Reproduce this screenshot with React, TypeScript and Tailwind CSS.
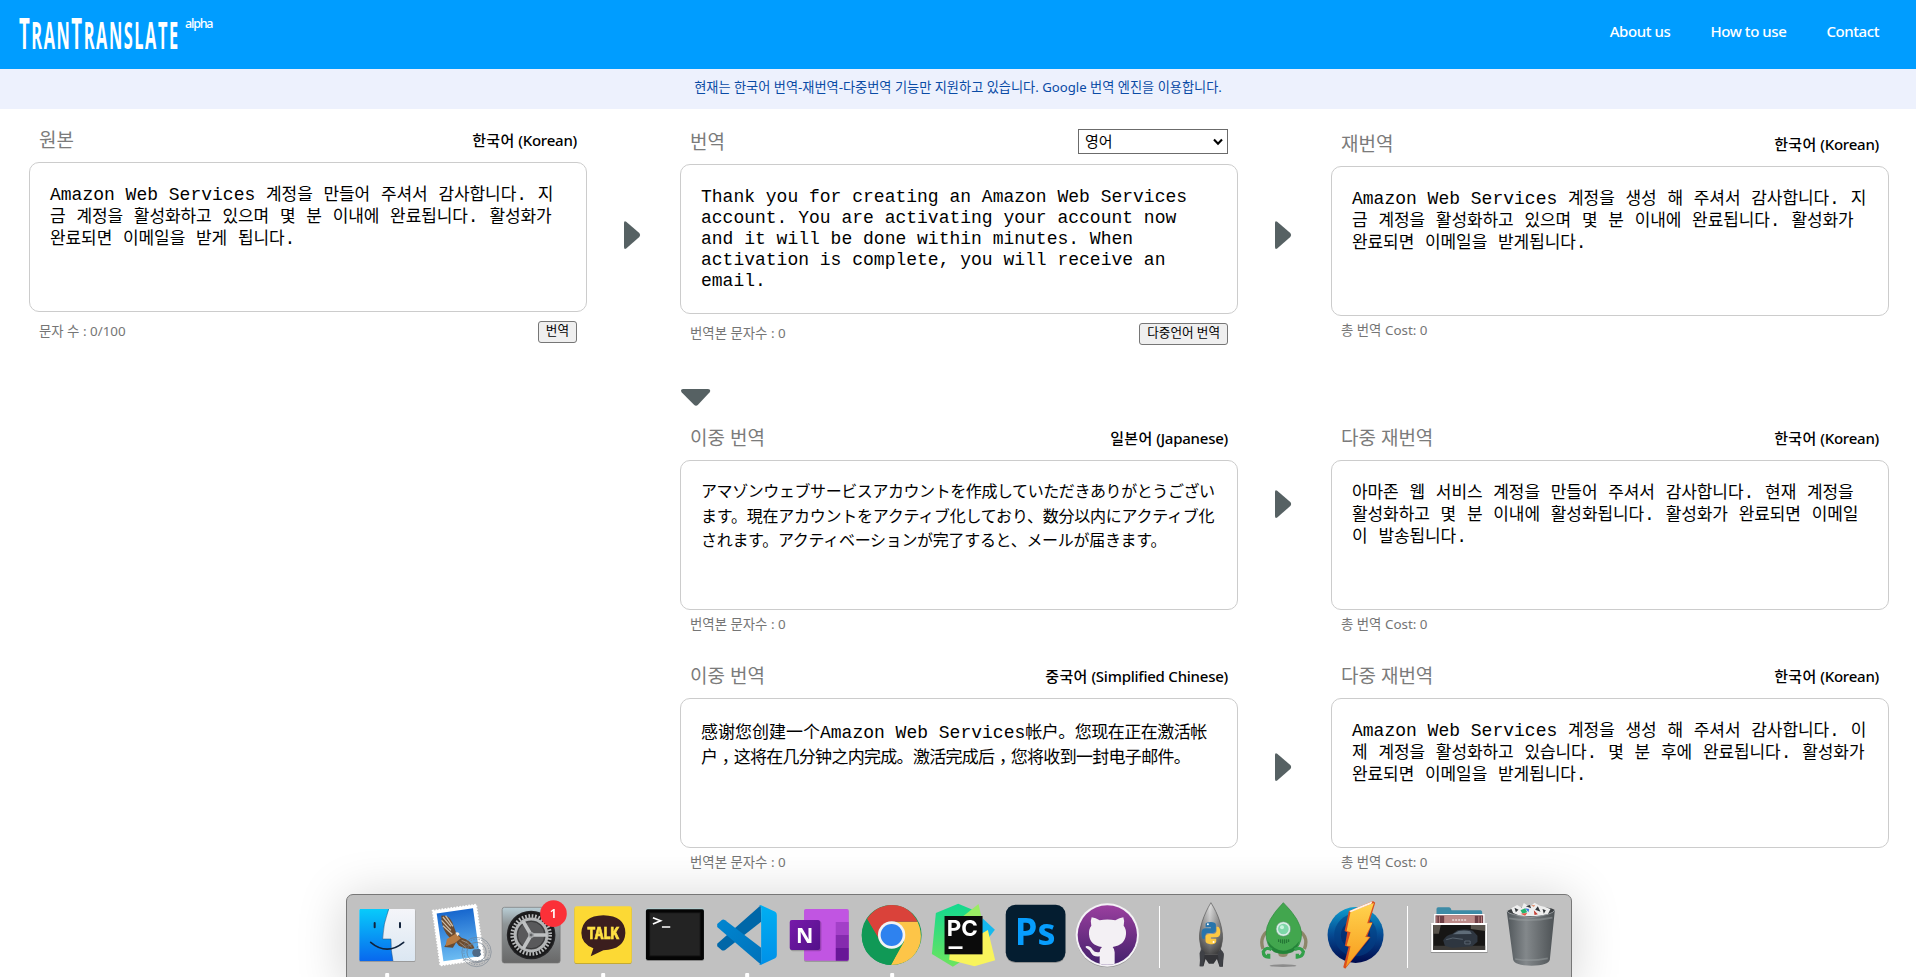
import React from "react";

const UI = "font-['Noto_Sans','Noto_Sans_CJK_KR',sans-serif]";

function splitRuns(line: string) {
  return line.match(/[\uac00-\ud7a3]+|[^\uac00-\ud7a3]+/g) ?? [];
}

function KoreanText({ lines }: { lines: string[] }) {
  return (
    <div className="-mt-px">
      {lines.map((line) => (
        <div key={line} className="h-[22px] leading-[22px] whitespace-pre">
          {splitRuns(line).map((run, i) =>
            /[\uac00-\ud7a3]/.test(run) ? (
              <span key={i} className="font-['Noto_Sans_CJK_KR',sans-serif] text-[17px] tracking-[-0.09px]">
                {run}
              </span>
            ) : (
              <span key={i}>{run}</span>
            ),
          )}
        </div>
      ))}
    </div>
  );
}

function EnglishText({ lines }: { lines: string[] }) {
  return (
    <div className="pt-[2px]">
      {lines.map((line) => (
        <div key={line} className="h-[21px] leading-[21px] whitespace-pre">
          {line}
        </div>
      ))}
    </div>
  );
}

function Card(props: {
  title: string;
  right: React.ReactNode;
  footer: string;
  button?: string;
  children: React.ReactNode;
}) {
  return (
    <section className="w-[558px] shrink-0">
      <div className="mb-[8px] flex h-[29px] items-center justify-between px-[10px]">
        <h2 className="pt-[2px] text-[19px] leading-[29px] text-[#7b7b7b]">{props.title}</h2>
        {props.right}
      </div>
      <div className="h-[150px] overflow-hidden rounded-[10px] border border-[#ccc] px-5 pt-5 font-['Liberation_Mono',monospace] text-[18px] text-black">
        {props.children}
      </div>
      <div className={props.button ? "flex h-[39px] items-center justify-between px-[10px]" : "flex h-[30px] items-center px-[10px]"}>
        <span className="pb-[2px] text-[13.4px] leading-5 text-[#757575]">{props.footer}</span>
        {props.button && (
          <button className="h-[22px] rounded-[3px] border border-[#767676] bg-[#efefef] px-[7px] pb-[2px] text-[12.6px] leading-[18px] text-black">
            {props.button}
          </button>
        )}
      </div>
    </section>
  );
}

function Lang({ children }: { children: string }) {
  const [name, ...rest] = children.split(" ");
  return (
    <span className="pt-px text-[15px] font-medium text-black">
      <span className="tracking-[0.35px]">{name}</span>
      <span className="tracking-[-0.24px]"> {rest.join(" ")}</span>
    </span>
  );
}

function RightArrow() {
  return (
    <svg className="-ml-[3px] h-[30px] w-[18px]" viewBox="0 0 18 30">
      <path d="M1 3Q1 .5 3.2 1.8L16.3 13Q18 15 16.3 17L3.2 28.6Q1 29.8 1 27Z" fill="#566163" />
    </svg>
  );
}

function Comma() {
  return <span className="inline-block translate-y-[5px] font-['Noto_Sans_CJK_TC',sans-serif]">，</span>;
}

function Cell({ vb, dot, children }: { vb: string; dot?: boolean; children: React.ReactNode }) {
  const [x, y] = vb.split(" ").map(Number);
  return (
    <svg className="h-[82px] w-[72.1px] shrink-0" viewBox={vb}>
      {children}
      {dot && <rect x={x + 102.5} y={y + 234} width="12" height="14" rx="3" fill="#fff" />}
    </svg>
  );
}

function Separator() {
  return (
    <div className="flex w-[31.4px] shrink-0 justify-center pt-[11px]">
      <div className="h-[62px] w-px bg-white" />
    </div>
  );
}

function Dock() {
  return (
    <div className="fixed top-[894px] left-[346px] flex h-[90px] w-[1226px] rounded-t-[7px] border border-[#777] bg-[#c1c1c1] pl-[4px] shadow-[0_4px_48px_2px_rgba(0,0,0,0.17)]">
      <svg width="0" height="0" className="absolute">
        <defs>
          <linearGradient id="fL" x1="0" y1="0" x2="0" y2="1"><stop stopColor="#08cbfb" /><stop offset="1" stopColor="#0868ee" /></linearGradient>
          <linearGradient id="fR" x1="0" y1="0" x2="0" y2="1"><stop stopColor="#f4f5f9" /><stop offset="1" stopColor="#dbe7f2" /></linearGradient>
          <linearGradient id="sky" x1="0" y1="0" x2="0" y2="1"><stop stopColor="#1767ce" /><stop offset="1" stopColor="#6cbcf2" /></linearGradient>
          <linearGradient id="set" x1="0" y1="0" x2="0" y2="1"><stop stopColor="#b9ced6" /><stop offset=".3" stopColor="#8f9597" /><stop offset="1" stopColor="#686868" /></linearGradient>
          <linearGradient id="vsR" x1="0" y1="0" x2="0" y2="1"><stop stopColor="#00aff2" /><stop offset="1" stopColor="#0090e8" /></linearGradient>
          <linearGradient id="vsL" x1="0" y1="0" x2="1" y2="1"><stop stopColor="#0086d1" /><stop offset="1" stopColor="#0072ba" /></linearGradient>
          <linearGradient id="on" x1="0" y1="0" x2="1" y2="1"><stop stopColor="#7719aa" /><stop offset="1" stopColor="#53118a" /></linearGradient>
          <linearGradient id="py" x1="0" y1="0" x2="0" y2="1"><stop stopColor="#12d88f" /><stop offset="1" stopColor="#6de45f" /></linearGradient>
          <linearGradient id="gh" x1="0" y1="0" x2="0" y2="1"><stop stopColor="#9a3f9f" /><stop offset="1" stopColor="#43206b" /></linearGradient>
          <linearGradient id="rk" x1="0" y1="0" x2="1" y2="0"><stop stopColor="#565656" /><stop offset=".45" stopColor="#d0d0d0" /><stop offset="1" stopColor="#454545" /></linearGradient>
          <linearGradient id="rk2" x1="0" y1="0" x2="0" y2="1"><stop stopColor="#fff" stopOpacity=".3" /><stop offset="1" stopColor="#222" stopOpacity=".75" /></linearGradient>
          <linearGradient id="bl" x1="0" y1="0" x2="0" y2="1"><stop stopColor="#0d9ed0" /><stop offset=".5" stopColor="#064a92" /><stop offset="1" stopColor="#000a4c" /></linearGradient>
          <linearGradient id="bo" x1="0" y1="0" x2="0" y2="1"><stop stopColor="#ffd34e" /><stop offset="1" stopColor="#f89a1c" /></linearGradient>
          <linearGradient id="tr" x1="0" y1="0" x2="1" y2="0"><stop stopColor="#50565a" /><stop offset=".4" stopColor="#83888b" /><stop offset="1" stopColor="#4c5154" /></linearGradient>
        </defs>
      </svg>

      <Cell vb="32 30 216.3 246" dot>
        <rect x="57" y="74" width="168" height="157" rx="4" fill="#000" opacity=".2" />
        <rect x="57" y="72" width="167" height="156" rx="3" fill="url(#fR)" />
        <path d="M60 72H146Q128 118 127 162H152Q151 196 158 228H60Q57 228 57 225V75Q57 72 60 72Z" fill="url(#fL)" />
        <path d="M145 72Q128 118 127 162H152Q151 196 158 228" fill="none" stroke="#1d4b78" strokeWidth="1.5" />
        <path d="M103 114V127M179 114V127" stroke="#13233c" strokeWidth="6" strokeLinecap="round" />
        <path d="M91 172Q140 213 190 172" fill="none" stroke="#10233c" strokeWidth="5" strokeLinecap="round" />
      </Cell>

      <Cell vb="248.3 30 216.3 246">
        <g transform="rotate(-8 354 150)">
          <rect x="288" y="67" width="132" height="166" fill="#fff" stroke="#fff" strokeWidth="5" strokeDasharray="5 4" />
          <rect x="299" y="77" width="110" height="145" fill="url(#sky)" />
        </g>
        <path d="M303 92Q326 88 336 112L348 144L364 158Q392 164 403 190Q382 196 356 182L348 172L338 188L312 186L322 170L330 160Q304 136 303 92Z" fill="#6b4a2e" />
        <path d="M308 96L332 124M304 106L332 136M308 122L336 148M316 92L338 124" stroke="#c9bba6" strokeWidth="4" />
        <path d="M364 166Q382 170 394 186M358 172L378 188" fill="none" stroke="#a3907a" strokeWidth="3" />
        <path d="M320 162L346 146L362 160L344 174L316 184Z" fill="#b77b42" />
        <path d="M345 143Q355 139 358 147L352 154Z" fill="#efe6d8" />
        <g fill="none" stroke="#6d7a88" strokeOpacity=".65" strokeWidth="3">
          <circle cx="409" cy="201" r="44" strokeWidth="2.5" />
          <circle cx="409" cy="201" r="38" strokeDasharray="4 4" />
          <circle cx="409" cy="201" r="29" />
          <path d="M368 226Q380 218 392 228T416 232T446 222M378 184Q390 176 400 180" />
        </g>
        <path d="M409 193Q418 188 422 196Q417 202 423 208Q417 219 409 215Q400 218 396 205Q396 190 409 193ZM409 190Q409 184 414 182Q415 188 409 190Z" fill="#506a86" />
      </Cell>

      <Cell vb="464.6 30 216.3 246">
        <rect x="486" y="67" width="174" height="167" rx="7" fill="url(#set)" stroke="#757575" strokeWidth="2" />
        <circle cx="573" cy="150" r="73" fill="#242426" />
        <circle cx="573" cy="150" r="69" fill="#1a1a1b" />
        <circle cx="573" cy="150" r="57" fill="none" stroke="#b9bbbc" strokeWidth="11" strokeDasharray="5 4.95" />
        <circle cx="573" cy="150" r="48" fill="#4b4c4e" stroke="#b4b6b7" strokeWidth="9" />
        <circle cx="573" cy="150" r="41" fill="#59595b" stroke="#2a2a2b" strokeWidth="2" />
        <path d="M573 150H620M573 150L549 109M573 150L549 191" stroke="#bfc1c2" strokeWidth="11" />
        <circle cx="573" cy="150" r="9" fill="#a4a6a8" />
        <circle cx="573" cy="150" r="4.5" fill="#636567" />
        <circle cx="640" cy="86" r="40" fill="#fb3038" />
        <text x="640" y="99" textAnchor="middle" fontFamily="Noto Sans" fontSize="38" fontWeight="600" fill="#fff">1</text>
      </Cell>

      <Cell vb="680.9 30 216.3 246" dot>
        <rect x="703" y="66" width="172" height="171" rx="7" fill="#b39a32" />
        <rect x="703" y="64" width="172" height="171" rx="7" fill="#fcd934" />
        <path d="M790 91Q856 93 856 144Q854 193 790 196L752 214L760 190Q724 176 724 144Q726 93 790 91Z" fill="#3b1e1e" />
        <text x="742" y="161" fontFamily="Inter" fontSize="46" fontWeight="800" textLength="96" lengthAdjust="spacingAndGlyphs" stroke="#ffe144" strokeWidth="2" fill="#ffe144">TALK</text>
      </Cell>

      <Cell vb="-2.8 30 216.3 246">
        <rect x="18" y="72" width="174" height="156" rx="6" fill="#000" opacity=".3" />
        <rect x="18" y="70" width="174" height="155" rx="6" fill="#b4d2d4" />
        <rect x="18" y="73" width="174" height="152" rx="5" fill="#050505" />
        <rect x="29" y="83" width="152" height="130" fill="#232323" stroke="#101010" strokeWidth="3" />
        <path d="M39 98L62 107L39 117M66 126H91" fill="none" stroke="#fff" strokeWidth="5" />
      </Cell>

      <Cell vb="213.5 30 216.3 246" dot>
        <path d="M363 61L232 176V184L246 196Q250 198 256 195L364 110Z" fill="#0067a8" />
        <path d="M246 105Q250 102 256 106L364 188V239L232 126V117Z" fill="url(#vsL)" />
        <path d="M364 61L406 80Q411 83 411 90V210Q411 217 406 220L364 239Q360 240 356 236Q364 240 364 230V70Q364 61 356 64Q360 60 364 61Z" fill="url(#vsR)" />
      </Cell>

      <Cell vb="429.8 30 216.3 246">
        <rect x="490" y="75" width="134" height="156" rx="5" fill="#000" opacity=".2" />
        <rect x="490" y="72" width="134" height="155" rx="5" fill="#c155e2" />
        <path d="M585 111H624V150H585Z" fill="#a340c8" />
        <path d="M585 150H624V189H585Z" fill="#852bae" />
        <path d="M585 189H624V222Q624 227 619 227H585Z" fill="#681797" />
        <rect x="450" y="108" width="92" height="91" rx="6" fill="#000" opacity=".2" />
        <rect x="447" y="105" width="91" height="90" rx="6" fill="url(#on)" />
        <text x="492" y="173" textAnchor="middle" fontFamily="Open Sans" fontSize="64" fontWeight="700" fill="#fff">N</text>
      </Cell>

      <Cell vb="646.1 30 216.3 246" dot>
        <circle cx="753" cy="150" r="90" fill="#109956" />
        <path d="M753 110H831Q857 170 815 216Q787 240 751 240L790 170Z" fill="#fdc548" />
        <path d="M753 110H831Q805 60 753 60Q705 62 679 102L715 162Q710 116 753 110Z" fill="#da423a" />
        <path d="M751 240L787 172L753 180L716 165L679 102Q650 150 676 198Q704 238 751 240Z" fill="#109956" />
        <circle cx="753" cy="150" r="41" fill="#f3f3f3" />
        <circle cx="753" cy="150" r="33" fill="#2e82ef" />
      </Cell>

      <Cell vb="22.4 30 216.3 246">
        <path d="M113 56L160 76L150 160L118 232L97 245L34 207L46 84Z" fill="url(#py)" />
        <path d="M174 57L187 116L120 100Z" fill="#9bec63" />
        <path d="M186 100L223 134L200 164L180 160Z" fill="#14b9ee" />
        <path d="M88 200L202 135L224 226L162 244L86 224Z" fill="#f8f45c" />
        <rect x="72" y="93" width="114" height="115" fill="#0b0b0b" />
        <text x="79" y="154" fontFamily="Inter" fontSize="66" fontWeight="700" textLength="93" lengthAdjust="spacingAndGlyphs" fill="#fff">PC</text>
        <rect x="84" y="184" width="42" height="8" fill="#fff" />
      </Cell>

      <Cell vb="238.7 30 216.3 246">
        <rect x="256" y="62" width="179" height="172" rx="29" fill="#000" opacity=".25" />
        <rect x="256" y="59" width="179" height="172" rx="29" fill="#041d30" />
        <text x="283" y="180" fontFamily="Open Sans" fontSize="112" fontWeight="700" textLength="122" lengthAdjust="spacingAndGlyphs" fill="#079dfd">Ps</text>
      </Cell>

      <Cell vb="455 30 216.3 246">
        <circle cx="561" cy="153" r="94" fill="#000" opacity=".25" />
        <circle cx="561" cy="150" r="95" fill="#f4f2f6" />
        <circle cx="561" cy="150" r="89" fill="url(#gh)" />
        <path d="M514 97Q526 98 538 106Q561 101 585 106Q598 98 609 97Q614 109 610 122Q618 132 617 148Q614 181 577 186Q583 192 583 202V236Q561 243 538 236V214Q520 217 513 205Q509 194 499 190Q492 184 500 183Q511 184 517 194Q524 204 538 201Q538 191 545 186Q508 182 506 148Q505 132 513 122Q509 108 514 97Z" fill="#f3f0f4" />
      </Cell>

      <Separator />

      <Cell vb="764.3 30 216.3 246">
        <path d="M842 190L838 244H850L856 222L866 236H880L890 222L898 245H908L910 210L898 184Z" fill="#333438" />
        <path d="M872 53C850 90 836 130 838 162Q840 190 850 208H894Q906 185 907 160C907 125 894 88 872 53Z" fill="url(#rk)" />
        <path d="M872 53C850 90 836 130 838 162Q840 190 850 208H894Q906 185 907 160C907 125 894 88 872 53Z" fill="url(#rk2)" stroke="#5a5a5a" strokeWidth="2" />
        <path d="M838 204Q845 186 854 204L848 244H840ZM892 204Q904 186 911 206L906 244H898Z" fill="#3f4146" />
        <path d="M856 122V116Q858 111 872 111Q886 112 887 119V136Q886 144 876 144H862Q854 146 853 162H848Q843 158 844 142Q845 130 856 130H872V127H856Z" fill="#2875ac" />
        <path d="M889 125H894Q901 130 900 144Q899 157 888 157H872V161H888V170Q885 178 871 178Q856 176 856 169V154Q858 147 868 147H880Q889 146 889 136Z" fill="#fbc842" />
        <circle cx="863" cy="118" r="3" fill="#fff" /><circle cx="880" cy="171" r="3" fill="#fff" />
      </Cell>

      <Cell vb="82 30 216.3 246">
        <ellipse cx="187" cy="242" rx="40" ry="4" fill="#8b8b8b" />
        <g fill="none" stroke="#8d8669" strokeWidth="10"><path d="M138 140Q116 160 127 192M240 140Q264 160 251 192" /></g>
        <ellipse cx="187" cy="207" rx="14" ry="9" fill="#918a6c" />
        <path d="M188 53Q136 106 136 146Q137 184 160 200Q188 212 216 200Q242 184 243 146Q240 104 188 53Z" fill="#42a64e" stroke="#2c8a3d" strokeWidth="2" />
        <path d="M141 168Q160 196 188 197Q216 196 236 168Q230 192 214 201Q188 212 162 201Q146 190 141 168Z" fill="#248339" />
        <circle cx="188" cy="132" r="22" fill="#d8efe5" stroke="#5f8f72" strokeWidth="2" />
        <circle cx="188" cy="132" r="16" fill="#7dd7a8" />
        <circle cx="184" cy="127" r="6" fill="#c7f3dd" />
        <path d="M174 163V171M180 163V174M186 163V176M192 163V176M198 163V174M204 163V171" stroke="#1f6b31" strokeWidth="3" />
        <g fill="none" stroke="#33a04a" strokeWidth="10"><path d="M153 194Q136 184 128 200Q128 216 144 216V206M222 194Q240 184 248 200Q246 216 230 216V206" /></g>
      </Cell>

      <Cell vb="298.3 30 216.3 246">
        <circle cx="405" cy="150" r="84" fill="url(#bl)" />
        <circle cx="405" cy="150" r="64" fill="#033d82" opacity=".6" />
        <circle cx="405" cy="150" r="44" fill="#011f61" opacity=".5" />
        <path d="M385 78L457 48L464 53L446 112L456 112L440 154L450 156L374 251L368 247L384 186L373 182L380 142L372 138Z" fill="#d94e1c" />
        <path d="M390 80L460 54L440 115L455 114L434 156L447 157L376 246L390 184L378 182L390 142L378 138Z" fill="url(#bo)" />
        <path d="M386 78L430 59L456 49L452 57L390 82Z" fill="#fff1e4" />
      </Cell>

      <Separator />

      <Cell vb="608.5 30 216.3 246">
        <path d="M649 72Q649 67 654 67H687Q692 67 694 76H782Q786 77 786 82V112H649Z" fill="#3d8ba6" />
        <rect x="642" y="87" width="151" height="40" fill="#fff" />
        <rect x="646" y="91" width="143" height="30" fill="#6f3f46" />
        <path d="M672 91H764V118H672Z" fill="#bd8b89" />
        <path d="M650 94V118M658 94V118M776 94V118M784 94V118" stroke="#d9a29a" strokeWidth="2" />
        <path d="M696 105H740" stroke="#fff" strokeWidth="3" strokeDasharray="6 3" />
        <rect x="632" y="117" width="170" height="87" fill="#000" opacity=".25" />
        <rect x="633" y="114" width="168" height="87" fill="#fff" />
        <rect x="639" y="120" width="156" height="75" fill="#171615" />
        <path d="M639 120H662L656 146H639ZM752 120H795V138L752 132Z" fill="#57524b" />
        <path d="M639 182H795V195H639Z" fill="#3b3936" />
        <path d="M669 166Q678 150 696 147L712 136Q735 130 758 137L772 152V170L756 184L696 188L674 182Z" fill="#2e3640" />
        <path d="M698 148L715 138Q734 134 750 139L755 147Z" fill="#5f6c78" />
        <path d="M678 164L698 159L728 163M734 168H750V177H734Z" fill="none" stroke="#6d7985" strokeWidth="2" />
      </Cell>

      <Cell vb="825.5 30 216.3 246">
        <path d="M861 80Q933 98 1005 76L990 224Q986 241 935 242Q884 241 880 224Z" fill="url(#tr)" />
        <path d="M868 100Q930 112 998 98M886 222Q930 230 984 220" fill="none" stroke="#9a9fa2" strokeOpacity=".5" strokeWidth="5" />
        <path d="M862 78Q880 66 933 66Q988 64 1004 74Q1000 94 933 96Q870 94 862 78Z" fill="#3b3f42" />
        <path d="M874 70L892 60L906 68L912 54L930 66L944 53L960 62L976 66L992 72L984 88L960 92L936 94L900 92L880 84Z" fill="#eeeeee" />
        <path d="M884 68L896 74L888 82ZM918 64L930 60L934 70ZM946 74L954 64L962 80ZM968 72L978 76L972 86Z" fill="#34383c" />
        <path d="M902 76L916 70L922 82L908 86Z" fill="#26b36e" />
        <path d="M916 70L928 72L926 82Z" fill="#3b77df" />
        <path d="M902 86L922 84L916 92Z" fill="#e95141" />
        <path d="M942 76L954 88L944 90Z" fill="#c43f35" />
        <path d="M934 60H946L942 67Z" fill="#e29a7c" />
        <path d="M861 78Q866 90 933 97Q1000 90 1005 75" fill="none" stroke="#979c9f" strokeWidth="3" />
      </Cell>
    </div>
  );
}

const KO1 = ["Amazon Web Services 계정을 만들어 주셔서 감사합니다. 지", "금 계정을 활성화하고 있으며 몇 분 이내에 완료됩니다. 활성화가", "완료되면 이메일을 받게 됩니다."];
const EN = ["Thank you for creating an Amazon Web Services", "account. You are activating your account now", "and it will be done within minutes. When", "activation is complete, you will receive an", "email."];
const KO2 = ["Amazon Web Services 계정을 생성 해 주셔서 감사합니다. 지", "금 계정을 활성화하고 있으며 몇 분 이내에 완료됩니다. 활성화가", "완료되면 이메일을 받게됩니다."];
const KO3 = ["아마존 웹 서비스 계정을 만들어 주셔서 감사합니다. 현재 계정을", "활성화하고 몇 분 이내에 활성화됩니다. 활성화가 완료되면 이메일", "이 발송됩니다."];
const KO4 = ["Amazon Web Services 계정을 생성 해 주셔서 감사합니다. 이", "제 계정을 활성화하고 있습니다. 몇 분 후에 완료됩니다. 활성화가", "완료되면 이메일을 받게됩니다."];

export default function App() {
  return (
    <div className={`h-[977px] w-[1916px] overflow-hidden bg-white ${UI}`}>
      <header className="flex h-[69px] justify-between bg-[#009dff] pr-[37px] pl-[19px] text-white">
        <div className="flex pt-[9px]">
          <div className="w-[160px]">
            <div className="w-max origin-left scale-x-[0.431] font-['Open_Sans',sans-serif] text-[38px] leading-[48px] font-bold tracking-[3.6px] whitespace-nowrap">
              <span className="text-[43px]">T</span>RAN<span className="text-[43px]">T</span>RANSLATE
            </div>
          </div>
          <sup className="top-0 ml-[6px] pt-[6px] text-[12.5px] leading-[18px] font-medium tracking-[-1.2px]">alpha</sup>
        </div>
        <nav className="flex gap-[40px] pt-[21px] text-[15px] leading-5 font-medium tracking-[-0.42px]">
          <a>About us</a>
          <a>How to use</a>
          <a>Contact</a>
        </nav>
      </header>
      <div className="flex h-10 justify-center bg-[#edf1fd] text-[13.2px] leading-[37px] text-[#0a4ba5]">
        현재는 한국어 번역-재번역-다중번역 기능만 지원하고 있습니다. Google 번역 엔진을 이용합니다.
      </div>

      <main className="pl-[29px]">
        <div className="flex h-[278px]">
          <div className="pt-[16px]">
            <Card title="원본" right={<Lang>한국어 (Korean)</Lang>} footer="문자 수 : 0/100" button="번역">
              <KoreanText lines={KO1} />
            </Card>
          </div>
          <div className="flex w-[93px] justify-center pt-[111px]"><RightArrow /></div>
          <div className="pt-[18px]">
            <Card
              title="번역"
              right={
                <div className="flex h-[25px] w-[150px] items-center justify-between border border-[#6b6b6b] bg-white pr-[4px] pl-[6px] text-[15px] leading-5">
                  <span className="pb-px">영어</span>
                  <svg className="h-[8px] w-[10px]" viewBox="0 0 10 8"><path d="M1 1.5L5 5.7L9 1.5" fill="none" stroke="#000" strokeWidth="2.1" /></svg>
                </div>
              }
              footer="번역본 문자수 : 0"
              button="다중언어 번역"
            >
              <EnglishText lines={EN} />
            </Card>
          </div>
          <div className="flex w-[93px] justify-center pt-[111px]"><RightArrow /></div>
          <div className="pt-[20px]">
            <Card title="재번역" right={<Lang>한국어 (Korean)</Lang>} footer="총 번역 Cost: 0">
              <KoreanText lines={KO2} />
            </Card>
          </div>
        </div>

        <div className="flex h-[36px] pl-[651px]">
          <svg className="mt-[1px] h-[19px] w-[32px]" viewBox="0 0 32 19">
            <path d="M3 1H28Q31.5 1.5 29.5 4.5L18 16.8Q16 18.6 14 16.8L1.8 4.5Q-.2 1.5 3 1Z" fill="#566163" />
          </svg>
        </div>

        <div className="flex h-[238px] pl-[651px]">
          <Card title="이중 번역" right={<Lang>일본어 (Japanese)</Lang>} footer="번역본 문자수 : 0">
            <div className="-mt-[3px] font-['Noto_Sans_CJK_JP',sans-serif] text-[16px] leading-[24.5px] whitespace-pre">
              <div className="tracking-[-0.42px]">アマゾンウェブサービスアカウントを作成していただきありがとうござい</div>
              <div className="tracking-[-0.24px]">ます。現在アカウントをアクティブ化しており、数分以内にアクティブ化</div>
              <div className="tracking-[-0.3px]">されます。アクティベーションが完了すると、メールが届きます。</div>
            </div>
          </Card>
          <div className="flex w-[93px] justify-center pt-[66px]"><RightArrow /></div>
          <Card title="다중 재번역" right={<Lang>한국어 (Korean)</Lang>} footer="총 번역 Cost: 0">
            <KoreanText lines={KO3} />
          </Card>
        </div>

        <div className="flex pl-[651px]">
          <Card title="이중 번역" right={<Lang>중국어 (Simplified Chinese)</Lang>} footer="번역본 문자수 : 0">
            <div className="-mt-px font-['Noto_Sans_CJK_SC',sans-serif] text-[17px] leading-[25px] whitespace-pre">
              <div className="h-[25px]">
                感谢您创建一个<span className="font-['Liberation_Mono',monospace] text-[18px]">Amazon Web Services</span>
                <span className="tracking-[-0.5px]">帐户。您现在正在激活帐</span>
              </div>
              <div className="h-[25px] tracking-[-0.7px]">
                户<Comma />这将在几分钟之内完成。激活完成后<Comma />您将收到一封电子邮件。
              </div>
            </div>
          </Card>
          <div className="flex w-[93px] justify-center pt-[91px]"><RightArrow /></div>
          <Card title="다중 재번역" right={<Lang>한국어 (Korean)</Lang>} footer="총 번역 Cost: 0">
            <KoreanText lines={KO4} />
          </Card>
        </div>
      </main>
      <Dock />
    </div>
  );
}
